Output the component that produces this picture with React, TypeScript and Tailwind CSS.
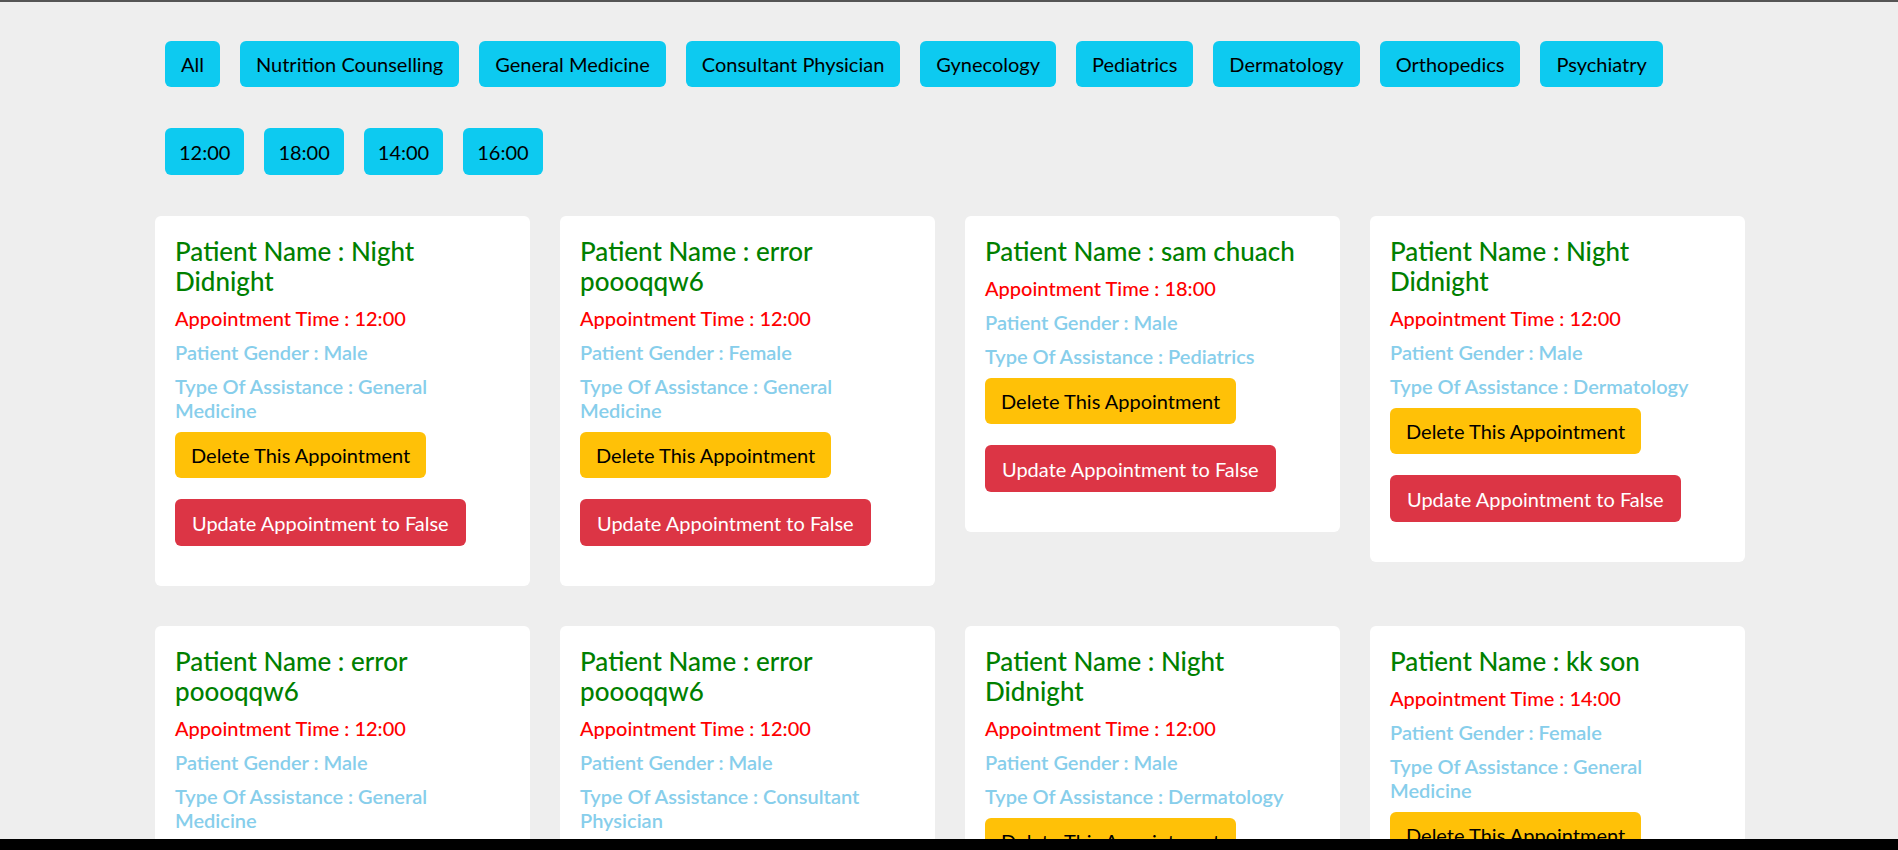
import React from "react";

const SPECIALTIES = [
  "All",
  "Nutrition Counselling",
  "General Medicine",
  "Consultant Physician",
  "Gynecology",
  "Pediatrics",
  "Dermatology",
  "Orthopedics",
  "Psychiatry",
];

const TIMES = ["12:00", "18:00", "14:00", "16:00"];

type Appointment = {
  name: string;
  time: string;
  gender: string;
  assistance: string;
};

const APPOINTMENTS: Appointment[] = [
  { name: "Night Didnight", time: "12:00", gender: "Male", assistance: "General Medicine" },
  { name: "error poooqqw6", time: "12:00", gender: "Female", assistance: "General Medicine" },
  { name: "sam chuach", time: "18:00", gender: "Male", assistance: "Pediatrics" },
  { name: "Night Didnight", time: "12:00", gender: "Male", assistance: "Dermatology" },
  { name: "error poooqqw6", time: "12:00", gender: "Male", assistance: "General Medicine" },
  { name: "error poooqqw6", time: "12:00", gender: "Male", assistance: "Consultant Physician" },
  { name: "Night Didnight", time: "12:00", gender: "Male", assistance: "Dermatology" },
  { name: "kk son", time: "14:00", gender: "Female", assistance: "General Medicine" },
];

function AppointmentCard({ a }: { a: Appointment }) {
  return (
    <div className="bg-white rounded-[6px] p-[20px]">
      <h5 className="text-[26px] leading-[30px] font-medium text-[#008000] mb-[10px]">
        Patient Name : {a.name}
      </h5>
      <h6 className="text-[20px] leading-[24px] font-medium text-[#ff0000] mb-[10px]">
        Appointment Time : {a.time}
      </h6>
      <h6 className="text-[20px] leading-[24px] font-semibold text-[#87ceeb] mb-[10px]">
        Patient Gender : {a.gender}
      </h6>
      <h6 className="text-[20px] leading-[24px] font-semibold text-[#87ceeb] mb-[10px]">
        Type Of Assistance : {a.assistance}
      </h6>
      <div className="flex flex-col items-start gap-[21px]">
        <button className="h-[46px] px-[16px] rounded-[6px] bg-[#ffc107] text-black text-[20px] leading-[30px]">
          Delete This Appointment
        </button>
        <button className="h-[47px] px-[17px] rounded-[6px] bg-[#dc3545] text-white text-[20px] leading-[30px] mb-[20px]">
          Update Appointment to False
        </button>
      </div>
    </div>
  );
}

export default function App() {
  return (
    <div
      className="min-h-[850px] bg-[#eeeeee] border-t-2 border-[#555555]"
      style={{ fontFamily: '"Segoe UI", Lato, "Noto Sans", sans-serif' }}
    >
      {/* Specialty filters */}
      <div className="pl-[165px] pt-[39px] flex flex-wrap gap-[20px]">
        {SPECIALTIES.map((s) => (
          <button
            key={s}
            className="h-[46px] px-[16px] rounded-[6px] bg-[#0dcaf0] text-black text-[20px] leading-[30px]"
          >
            {s}
          </button>
        ))}
      </div>

      {/* Time filters */}
      <div className="pl-[165px] mt-[41px] flex gap-[20px]">
        {TIMES.map((t) => (
          <button
            key={t}
            className="h-[47px] px-[14px] rounded-[6px] bg-[#0dcaf0] text-black text-[20px] leading-[30px]"
          >
            {t}
          </button>
        ))}
      </div>

      {/* Cards */}
      <div className="pl-[155px] mt-[41px] grid grid-cols-[repeat(4,375px)] gap-x-[30px] gap-y-[40px] items-start">
        {APPOINTMENTS.map((a, i) => (
          <AppointmentCard key={i} a={a} />
        ))}
      </div>

      <div className="fixed bottom-0 left-0 right-0 h-[11px] bg-black" />
    </div>
  );
}
